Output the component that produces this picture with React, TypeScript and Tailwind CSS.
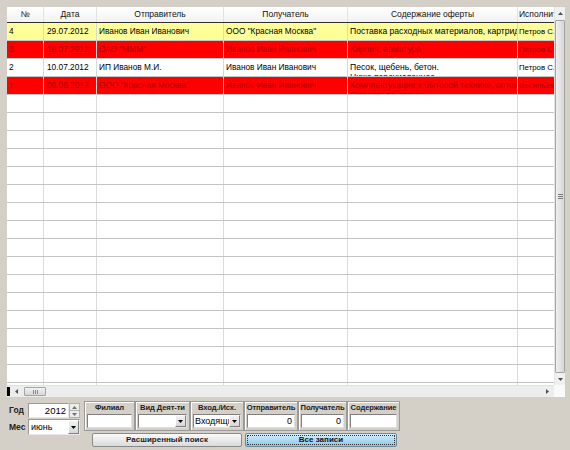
import React from "react";

type Row = {
  n: string;
  d: string;
  s: string;
  r: string;
  c: string[];
  e: string;
  kind: "y" | "r" | "w";
};

const rows: Row[] = [
  { n: "4", d: "29.07.2012", s: "Иванов Иван Иванович", r: 'ООО "Красная Москва"', c: ["Поставка расходных материалов, картриджей"], e: "Петров С.А.", kind: "y" },
  { n: "3", d: "19.07.2012", s: 'ОАО "МММ"', r: "Иванов Иван Иванович", c: ["Кирпич, арматура"], e: "Петров С.А.", kind: "r" },
  { n: "2", d: "10.07.2012", s: "ИП Иванов М.И.", r: "Иванов Иван Иванович", c: ["Песок, щебень, бетон.", "Ниже перечисленное"], e: "Петров С.А.", kind: "w" },
  { n: "1", d: "06.06.2012", s: 'ООО "Красная Москва"', r: "Иванов Иван Иванович", c: ["Комплектующие к бытовой технике, оптом", "Смесители, краны"], e: "Васильев В.В.", kind: "r" },
];

const cols = "grid grid-cols-[37px_53px_127px_124px_170px_52px] w-max";

function TriUp({ c = "#505050" }: { c?: string }) {
  return (
    <svg width="5" height="3" viewBox="0 0 5 3">
      <path d="M0 3 L2.5 0 L5 3 Z" fill={c} />
    </svg>
  );
}
function TriDown({ c = "#505050", w = 5, h = 3 }: { c?: string; w?: number; h?: number }) {
  return (
    <svg width={w} height={h} viewBox="0 0 5 3">
      <path d="M0 0 L5 0 L2.5 3 Z" fill={c} />
    </svg>
  );
}
function TriLeft() {
  return (
    <svg width="3" height="5" viewBox="0 0 3 5">
      <path d="M3 0 L3 5 L0 2.5 Z" fill="#505050" />
    </svg>
  );
}
function TriRight() {
  return (
    <svg width="3" height="5" viewBox="0 0 3 5">
      <path d="M0 0 L3 2.5 L0 5 Z" fill="#505050" />
    </svg>
  );
}

function DataRow({ row }: { row: Row }) {
  const bg = row.kind === "y" ? "bg-[#ffff99] text-black" : row.kind === "r" ? "bg-[#ff0000] text-[#b00000]" : "bg-white text-black";
  const cell = "border-r border-[#d8d8d8] overflow-hidden whitespace-nowrap leading-[17px]";
  return (
    <div className={`${cols} h-[18px] border-b border-[#c8c8c8] text-[8.3px] ${bg}`}>
      <div className={`${cell} pl-[2px]`}>{row.n}</div>
      <div className={`${cell} pl-[3px]`}>{row.d}</div>
      <div className={`${cell} pl-[2px]`}>{row.s}</div>
      <div className={`${cell} pl-[2px]`}>{row.r}</div>
      <div className="border-r border-[#d8d8d8] overflow-hidden whitespace-nowrap pl-[2px] pt-[3px] leading-[10px] text-[8.6px]">
        {row.c.map((l, i) => (
          <div key={i}>{l}</div>
        ))}
      </div>
      <div className={`${cell} pl-[1px] text-[7.8px]`}>{row.e}</div>
    </div>
  );
}

function EmptyRow() {
  const cell = "border-r border-[#dcdcdc]";
  return (
    <div className={`${cols} h-[18px] border-b border-[#c4c4c4] bg-white`}>
      <div className={cell} />
      <div className={cell} />
      <div className={cell} />
      <div className={cell} />
      <div className={cell} />
      <div className={cell} />
    </div>
  );
}

function Header() {
  const hc = "border-r border-[#e2e2e2] flex items-center justify-center whitespace-nowrap overflow-hidden";
  return (
    <div className={`${cols} h-[16px] border-b border-[#303030] bg-gradient-to-b from-white to-[#f2f2f2] text-[8.5px] text-[#111]`}>
      <div className={hc}>№</div>
      <div className={hc}>Дата</div>
      <div className={hc}>Отправитель</div>
      <div className={hc}>Получатель</div>
      <div className={hc}>Содержание оферты</div>
      <div className="flex items-center pl-[1px] whitespace-nowrap overflow-hidden">Исполнитель</div>
    </div>
  );
}

function VScroll() {
  return (
    <div className="w-[11px] h-full flex flex-col bg-[#f0f0f0] border-l border-[#e4e4e4]">
      <div className="h-[13px] flex items-center justify-center">
        <TriUp />
      </div>
      <div className="flex-1 border border-[#a4a4a4] rounded-[1px] bg-gradient-to-r from-[#f0f0f0] to-[#d6d6d6] flex items-center justify-center">
        <div className="flex flex-col gap-[1px]">
          <div className="w-[5px] h-[1px] bg-[#7a7a7a]" />
          <div className="w-[5px] h-[1px] bg-[#7a7a7a]" />
          <div className="w-[5px] h-[1px] bg-[#7a7a7a]" />
        </div>
      </div>
      <div className="h-[12px] flex items-center justify-center">
        <TriDown />
      </div>
    </div>
  );
}

function HScroll() {
  return (
    <div className="flex h-[12px]">
      <div className="w-[547px] flex items-stretch bg-[#ededed] border-t border-[#e2e2e2]">
        <div className="w-[3px] bg-black my-[1px]" />
        <div className="w-[13px] flex items-center justify-center">
          <TriLeft />
        </div>
        <div className="w-[22px] ml-[1px] my-[1px] border border-[#a4a4a4] rounded-[1px] bg-gradient-to-b from-[#f2f2f2] to-[#d6d6d6] flex items-center justify-center gap-[1px]">
          <div className="w-[1px] h-[4px] bg-[#8a8a8a]" />
          <div className="w-[1px] h-[4px] bg-[#8a8a8a]" />
          <div className="w-[1px] h-[4px] bg-[#8a8a8a]" />
        </div>
        <div className="flex-1" />
        <div className="w-[14px] flex items-center justify-center">
          <TriRight />
        </div>
      </div>
      <div className="w-[11px] bg-[#fafafa]" />
    </div>
  );
}

function DropBtn() {
  return (
    <div className="w-[11px] h-full bg-gradient-to-b from-[#f2f2f2] to-[#d8d8d8] border border-t-white border-l-white border-b-[#808080] border-r-[#808080] flex items-center justify-center">
      <TriDown c="#000" w={5} h={3} />
    </div>
  );
}

function Box({ w, label, children }: { w: string; label: string; children?: React.ReactNode }) {
  return (
    <div className={`${w} h-[30px] border border-[#9a9a9a] shadow-[inset_1px_1px_0_#ffffff] flex flex-col px-[2px]`}>
      <div className="h-[12px] -mx-[2px] text-[7.6px] font-bold text-[#222] text-center leading-[12px] whitespace-nowrap overflow-hidden tracking-[-0.1px]">
        {label}
      </div>
      <div className="h-[14px] bg-white border border-[#808080] border-b-[#e0e0e0] border-r-[#e0e0e0] flex items-stretch text-[9px]">
        {children}
      </div>
    </div>
  );
}

export default function App() {
  const empties = Array.from({ length: 17 });
  return (
    <div className="w-[570px] h-[450px] bg-[#d4d0c8] overflow-hidden font-['Liberation_Sans',Arial,sans-serif] text-black">
      <div className="pt-[7px] pl-[7px]">
        <div className="w-[558px] h-[390px] flex flex-col bg-white">
          <div className="flex h-[378px]">
            <div className="w-[547px] h-full overflow-hidden">
              <Header />
              {rows.map((r, i) => (
                <DataRow key={i} row={r} />
              ))}
              {empties.map((_, i) => (
                <EmptyRow key={i} />
              ))}
            </div>
            <VScroll />
          </div>
          <HScroll />
        </div>
      </div>

      <div className="flex pt-[4px]">
        <div className="w-[84px] pl-[9px] pt-[2px] flex flex-col gap-[1px]">
          <div className="flex items-center h-[15px]">
            <span className="w-[19px] text-[8.5px] font-bold text-[#222]">Год</span>
            <div className="w-[41px] h-[15px] bg-white border border-[#9a9a9a] border-b-[#e8e8e8] border-r-[#e8e8e8] text-[9.5px] text-right pr-[2px] leading-[13px]">
              2012
            </div>
            <div className="w-[11px] h-[15px] flex flex-col">
              <div className="flex-1 bg-[#ececec] border border-[#b0b0b0] flex items-center justify-center">
                <TriUp c="#707070" />
              </div>
              <div className="flex-1 bg-[#ececec] border border-t-0 border-[#b0b0b0] flex items-center justify-center">
                <TriDown c="#707070" />
              </div>
            </div>
          </div>
          <div className="flex items-center h-[16px]">
            <span className="w-[19px] text-[8.5px] font-bold text-[#222]">Мес</span>
            <div className="w-[52px] h-[16px] bg-white border border-[#9a9a9a] border-b-[#e8e8e8] border-r-[#e8e8e8] flex">
              <span className="flex-1 pl-[2px] text-[9px] leading-[14px]">июнь</span>
              <DropBtn />
            </div>
          </div>
        </div>

        <div className="flex flex-col">
          <div className="flex">
            <Box w="w-[51px]" label="Филиал" />
            <Box w="w-[55px]" label="Вид Деят-ти">
              <span className="flex-1" />
              <DropBtn />
            </Box>
            <Box w="w-[54px]" label="Вход./Исх.">
              <span className="flex-1 pl-[1px] leading-[12px] whitespace-nowrap overflow-hidden">Входящие</span>
              <DropBtn />
            </Box>
            <Box w="w-[54px]" label="Отправитель">
              <span className="flex-1 text-right pr-[2px] leading-[12px]">0</span>
            </Box>
            <Box w="w-[49px]" label="Получатель">
              <span className="flex-1 text-right pr-[2px] leading-[12px]">0</span>
            </Box>
            <Box w="w-[53px]" label="Содержание" />
          </div>
          <div className="flex pl-[8px] gap-[3px] mt-[2px]">
            <div className="w-[150px] h-[14px] rounded-[2px] border border-[#8a8a8a] bg-gradient-to-b from-[#fafafa] to-[#dadada] text-[8px] font-bold text-[#222] flex items-center justify-center">
              Расширенный поиск
            </div>
            <div className="w-[152px] h-[14px] rounded-[2px] border border-[#6a8aa0] bg-gradient-to-b from-[#d8f0fc] to-[#86c6e8] p-[1px]">
              <div className="w-full h-full border border-dotted border-[#333] text-[8px] font-bold text-[#112] flex items-center justify-center">
                Все записи
              </div>
            </div>
          </div>
        </div>
      </div>
    </div>
  );
}
